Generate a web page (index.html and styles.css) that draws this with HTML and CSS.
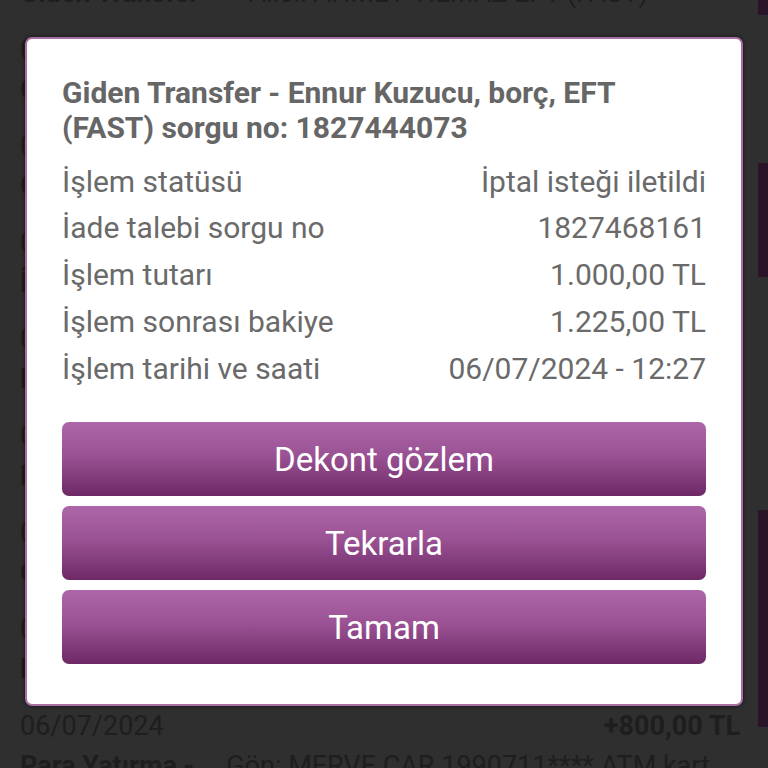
FILE: index.html
```html
<!DOCTYPE html>
<html lang="tr">
<head>
<meta charset="utf-8">
<title>İşlem detayı</title>
<link rel="stylesheet" href="styles.css">
</head>
<body>
<div class="screen">
  <div class="bg">
    <div class="list">
      <div class="item">
        <div class="item-top"><span>05/07/2024</span><span class="amt">-250,00 TL</span></div>
        <div class="item-desc"><span class="type">Giden Transfer -</span><span class="desc">Alıcı: AHMET YILMAZ EFT (FAST)</span></div>
      </div>
      <div class="item">
        <div class="item-top"><span>05/07/2024</span><span class="amt">+1.200,00 TL</span></div>
        <div class="item-desc"><span class="type">Gelen Transfer -</span><span class="desc">Gön: ENNUR KUZUCU FAST</span></div>
      </div>
      <div class="item">
        <div class="item-top"><span>06/07/2024</span><span class="amt">-1.000,00 TL</span></div>
        <div class="item-desc"><span class="type">Giden Transfer -</span><span class="desc">Ennur Kuzucu, borç, EFT</span></div>
      </div>
      <div class="item">
        <div class="item-top"><span>06/07/2024</span><span class="amt">+1.000,00 TL</span></div>
        <div class="item-desc"><span class="type">İade -</span><span class="desc">İptal isteği iletildi</span></div>
      </div>
      <div class="item">
        <div class="item-top"><span>06/07/2024</span><span class="amt">-75,00 TL</span></div>
        <div class="item-desc"><span class="type">Kart Harcama -</span><span class="desc">MARKET ALIŞVERİŞİ</span></div>
      </div>
      <div class="item">
        <div class="item-top"><span>06/07/2024</span><span class="amt">-150,00 TL</span></div>
        <div class="item-desc"><span class="type">Fatura Ödeme -</span><span class="desc">ELEKTRİK FATURASI</span></div>
      </div>
      <div class="item">
        <div class="item-top"><span>06/07/2024</span><span class="amt">+300,00 TL</span></div>
        <div class="item-desc"><span class="type">Gelen Transfer -</span><span class="desc">Gön: ALİ KAYA FAST</span></div>
      </div>
      <div class="item">
        <div class="item-top"><span>06/07/2024</span><span class="amt">-50,00 TL</span></div>
        <div class="item-desc"><span class="type">Para Çekme -</span><span class="desc">ATM kart ile</span></div>
      </div>
      <div class="item">
        <div class="item-top"><span>06/07/2024</span><span class="amt">+800,00 TL</span></div>
        <div class="item-desc"><span class="type">Para Yatırma -</span><span class="desc">Gön: MERVE CAR 1990711**** ATM kart</span></div>
      </div>
    </div>
    <div class="rail">
      <div class="seg seg-a"></div>
      <div class="gap gap-a"></div>
      <div class="seg seg-b"></div>
      <div class="gap gap-b"></div>
      <div class="seg seg-c"></div>
    </div>
  </div>

  <div class="dialog">
    <h1 class="title">Giden Transfer - Ennur Kuzucu, borç, EFT (FAST) sorgu no: 1827444073</h1>
    <div class="rows">
      <div class="row"><span>İşlem statüsü</span><span>İptal isteği iletildi</span></div>
      <div class="row"><span>İade talebi sorgu no</span><span>1827468161</span></div>
      <div class="row"><span>İşlem tutarı</span><span>1.000,00 TL</span></div>
      <div class="row"><span>İşlem sonrası bakiye</span><span>1.225,00 TL</span></div>
      <div class="row"><span>İşlem tarihi ve saati</span><span>06/07/2024 - 12:27</span></div>
    </div>
    <div class="actions">
      <button class="btn">Dekont gözlem</button>
      <button class="btn">Tekrarla</button>
      <button class="btn">Tamam</button>
    </div>
  </div>
</div>
</body>
</html>
```

FILE: styles.css
```css
* { box-sizing: border-box; }

html, body {
  margin: 0;
  padding: 0;
  width: 768px;
  height: 768px;
  overflow: hidden;
  background: #2f2f2f;
  font-family: Roboto, "Noto Sans", "Liberation Sans", sans-serif;
}

.screen {
  position: relative;
  width: 768px;
  height: 768px;
  overflow: hidden;
}

/* dimmed list behind the dialog */
.bg {
  display: flex;
  width: 768px;
  height: 768px;
}

.list {
  flex: 1;
  margin-top: -65px;
  padding: 0 18px 0 20px;
  color: #1e1e1e;
  font-size: 27px;
}

.item {
  height: 96.6px;
}

.item-top {
  display: flex;
  justify-content: space-between;
  line-height: 36px;
  height: 40px;
}

.amt { font-weight: 700; }

.item-desc {
  display: flex;
  gap: 32px;
  line-height: 36px;
  white-space: nowrap;
}

.type { font-weight: 700; }

.rail {
  width: 10px;
  display: flex;
  flex-direction: column;
}

.seg { background: #2a1528; }
.seg-a { height: 15px; }
.gap-a { height: 148px; }
.seg-b { height: 114px; }
.gap-b { height: 233px; }
.seg-c { height: 217px; }

/* dialog */
.dialog {
  position: absolute;
  left: 25px;
  top: 37px;
  width: 718px;
  background: #ffffff;
  border: 2px solid #a86fa0;
  border-radius: 7px;
  box-shadow: 0 0 4px rgba(0, 0, 0, 0.6);
  padding: 36px 35px 40px 35px;
  color: #666666;
}

.title {
  margin: 0;
  font-size: 30px;
  line-height: 35px;
  font-weight: 700;
  color: #666666;
}

.rows {
  margin-top: 13.5px;
}

.row {
  display: flex;
  justify-content: space-between;
  font-size: 30px;
  line-height: 46.75px;
  color: #6a6a6a;
}

.actions {
  margin-top: 30px;
  display: flex;
  flex-direction: column;
  gap: 10px;
}

.btn {
  display: block;
  width: 100%;
  height: 74px;
  border: 0;
  border-radius: 7px;
  background: linear-gradient(to bottom, #ad66a7 0%, #9a5294 45%, #6e2866 100%);
  color: #ffffff;
  font-family: Roboto, "Noto Sans", "Liberation Sans", sans-serif;
  font-size: 33px;
  padding: 0;
}
```
